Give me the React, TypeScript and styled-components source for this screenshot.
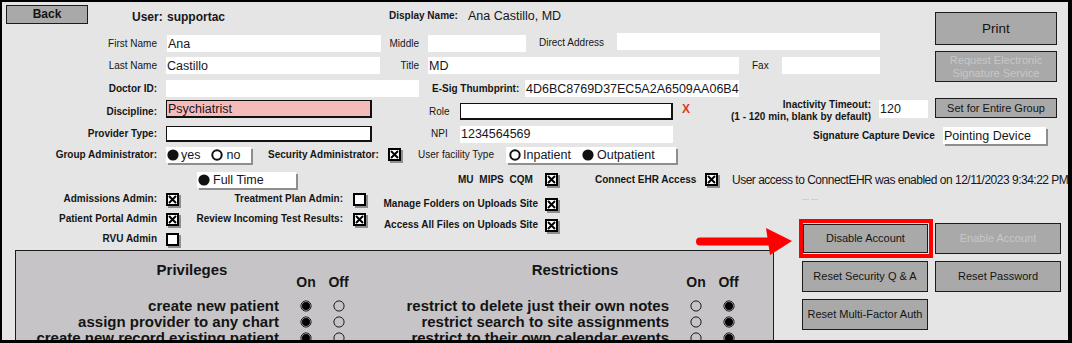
import React from 'react';
import styled, { createGlobalStyle, css } from 'styled-components';

const GlobalStyle = createGlobalStyle`
	html,
	body {
		margin: 0;
		padding: 0;
		background: #ffffff;
	}

	body {
		font-family: 'Liberation Sans', Arial, sans-serif;
		color: #141414;
	}
`;

const Frame = styled.div`
	box-sizing: border-box;
	width: 1072px;
	height: 343px;
	border: 2px solid #000;
	border-right-width: 4px;
	border-bottom-width: 3px;
	background: #e5e5e5;
	overflow: hidden;
`;

const Top = styled.div`
	display: flex;
	align-items: flex-start;
`;

const FormCol = styled.div`
	width: 928px;
	display: flex;
	flex-direction: column;
`;

const SideCol = styled.div`
	margin-left: 5px;
	padding-top: 10px;
	display: flex;
	flex-direction: column;
`;

const Row = styled.div<{ $mt: number; $h: number; $align?: string }>`
	display: flex;
	align-items: ${({ $align }) => $align ?? 'center'};
	margin-top: ${({ $mt }) => $mt}px;
	height: ${({ $h }) => $h}px;
	flex: none;
`;

const HeaderText = styled.span<{ $w?: number; $ml?: number; $mt: number; $size: number; $bold?: boolean }>`
	flex: none;
	${({ $w }) => ($w ? css`width: ${$w}px;` : '')}
	margin-left: ${({ $ml }) => $ml ?? 0}px;
	margin-top: ${({ $mt }) => $mt}px;
	font-size: ${({ $size }) => $size}px;
	font-weight: ${({ $bold }) => ($bold ? 700 : 400)};
	line-height: 14px;
	white-space: nowrap;
	color: #16161c;
`;

const Label = styled.span<{ $w?: number; $ml?: number; $bold?: boolean; $left?: boolean; $end?: boolean }>`
	flex: none;
	box-sizing: border-box;
	${({ $w }) => ($w ? css`width: ${$w}px;` : '')}
	margin-left: ${({ $ml }) => $ml ?? 0}px;
	font-size: 10px;
	line-height: 16px;
	font-weight: ${({ $bold }) => ($bold ? 700 : 400)};
	text-align: ${({ $left }) => ($left ? 'left' : 'right')};
	white-space: nowrap;
	color: #151515;
	${({ $end }) => ($end ? css`align-self: flex-end;` : '')}
`;

const SpacedLabel = styled(Label)`
	word-spacing: 3px;
`;

const InfoBlock = styled.div<{ $w: number; $ml: number }>`
	flex: none;
	width: ${({ $w }) => $w}px;
	margin-left: ${({ $ml }) => $ml}px;
	padding-top: 3px;
	font-size: 10px;
	font-weight: 700;
	line-height: 12px;
	text-align: right;
	white-space: nowrap;
	color: #151515;
`;

type Look = 'plain' | 'boxed' | 'pink' | 'raised';

const Field = styled.div<{ $w: number; $h?: number; $ml?: number; $look?: Look; $self?: string }>`
	flex: none;
	box-sizing: border-box;
	display: flex;
	align-items: center;
	width: ${({ $w }) => $w}px;
	height: ${({ $h }) => $h ?? 17}px;
	margin-left: ${({ $ml }) => $ml ?? 0}px;
	${({ $self }) => ($self ? css`align-self: ${$self};` : '')}
	padding-left: 1px;
	background: #ffffff;
	font-size: 12.5px;
	white-space: nowrap;
	overflow: hidden;
	color: #16161c;

	${({ $look }) =>
		$look === 'boxed' || $look === 'pink'
			? css`
					border: 1px solid #111;
					border-right-width: 2px;
					border-bottom-width: 2px;
			  `
			: ''}
	${({ $look }) => ($look === 'pink' ? css`background: #f5bbbb;` : '')}
	${({ $look }) =>
		$look === 'raised'
			? css`
					overflow: visible;
					box-shadow: 2px 2px 0 #8e8e8e;
			  `
			: ''}
`;

const OptionText = styled.span<{ $ml: number }>`
	display: inline-flex;
	margin-left: ${({ $ml }) => $ml}px;
	font-size: 12.5px;
	line-height: 14px;
	color: #16161c;
`;

const RedX = styled.span`
	flex: none;
	width: 8px;
	margin-left: 9px;
	font-size: 12px;
	font-weight: 700;
	color: #e3372a;
`;

const Btn = styled.button<{ $w: number; $h: number; $ml?: number; $mt?: number; $fs?: number; $bold?: boolean }>`
	flex: none;
	box-sizing: border-box;
	width: ${({ $w }) => $w}px;
	height: ${({ $h }) => $h}px;
	margin: 0;
	margin-left: ${({ $ml }) => $ml ?? 0}px;
	margin-top: ${({ $mt }) => $mt ?? 0}px;
	padding: 0 2px;
	background: #a9a9a9;
	border: 1px solid #1c1c1c;
	border-radius: 0;
	font-family: inherit;
	font-size: ${({ $fs }) => $fs ?? 11}px;
	font-weight: ${({ $bold }) => ($bold ? 700 : 400)};
	line-height: 13px;
	color: #141414;

	&:disabled {
		color: #c7c7c7;
	}
`;

const InfoText = styled.span<{ $ml: number }>`
	margin-left: ${({ $ml }) => $ml}px;
	font-size: 12px;
	letter-spacing: -0.5px;
	white-space: nowrap;
	color: #16161c;
`;

const CheckWrap = styled.span<{ $ml?: number }>`
	flex: none;
	display: inline-flex;
	width: 13px;
	height: 13px;
	margin-left: ${({ $ml }) => $ml ?? 0}px;
	background: #ffffff;
	box-shadow: 2px 2px 0 #8e8e8e;
`;

function Check({ on, ml }: { on: boolean; ml?: number }) {
	return (
		<CheckWrap $ml={ml}>
			<svg width="13" height="13" viewBox="0 0 13 13">
				<rect x="1" y="1" width="11" height="11" fill="#fff" stroke="#000" strokeWidth="2" />
				{on ? <path d="M3 3 L10 10 M10 3 L3 10" stroke="#000" strokeWidth="2" /> : null}
			</svg>
		</CheckWrap>
	);
}

const DotWrap = styled.span`
	flex: none;
	display: inline-flex;
	width: 12px;
	height: 12px;
`;

function Dot({ on }: { on: boolean }) {
	return (
		<DotWrap>
			<svg width="12" height="12" viewBox="0 0 12 12">
				{on ? (
					<circle cx="6" cy="6" r="5.6" fill="#111" />
				) : (
					<circle cx="6" cy="6" r="4.7" fill="#fff" stroke="#111" strokeWidth="2" />
				)}
			</svg>
		</DotWrap>
	);
}

const Section = styled.div`
	position: relative;
	display: flex;
	margin-top: 4px;
`;

const LeftCol = styled.div`
	width: 797px;
	flex: none;
	display: flex;
	flex-direction: column;
`;

const AdminArea = styled.div`
	display: flex;
	height: 56px;
`;

const AdminCol = styled.div<{ $ml?: number; $mt?: number; $gap: number }>`
	display: flex;
	flex-direction: column;
	gap: ${({ $gap }) => $gap}px;
	margin-left: ${({ $ml }) => $ml ?? 0}px;
	margin-top: ${({ $mt }) => $mt ?? 0}px;
`;

const AdminRow = styled.div`
	display: flex;
	align-items: center;
	height: 14px;
`;

const Panel = styled.div`
	box-sizing: border-box;
	width: 759px;
	height: 100px;
	margin: 2px 0 0 13px;
	padding-top: 10px;
	border: 1px solid #1c1c1c;
	background: #c6c4c6;
	display: flex;
`;

const ListGrid = styled.div<{ $text: number }>`
	display: grid;
	grid-template-columns: ${({ $text }) => $text}px 32px 33px;
	grid-template-rows: 37px repeat(4, 16px);
`;

const ListTitle = styled.div<{ $pad: number }>`
	grid-column: 1;
	align-self: start;
	padding-left: ${({ $pad }) => $pad}px;
	text-align: center;
	font-size: 15px;
	font-weight: 700;
	line-height: 18px;
	color: #141414;
`;

const ColHead = styled.div`
	align-self: start;
	margin-top: 13px;
	text-align: center;
	font-size: 14px;
	font-weight: 700;
	line-height: 16px;
	color: #141414;
`;

const ItemText = styled.div`
	grid-column: 1;
	padding-right: 11px;
	text-align: right;
	font-size: 15px;
	font-weight: 700;
	line-height: 16px;
	white-space: nowrap;
	color: #141414;
`;

const RadioCell = styled.div`
	display: flex;
	align-items: center;
	justify-content: center;
`;

function PanelRadio({ on }: { on: boolean }) {
	return (
		<svg width="12" height="12" viewBox="0 0 12 12">
			<circle cx="6" cy="6" r="5.1" fill="none" stroke="#1a1a1a" strokeWidth="1" />
			{on ? <circle cx="6" cy="6" r="4" fill="#000" /> : null}
		</svg>
	);
}

const RightCol = styled.div`
	display: flex;
	flex-direction: column;
`;

const Dashes = styled.div`
	width: 16px;
	height: 1px;
	margin: 7px 0 0 3px;
	background: repeating-linear-gradient(90deg, #cdcdcd 0 7px, transparent 7px 9px);
`;

const BtnRow = styled.div<{ $mt: number }>`
	display: flex;
	align-items: center;
	margin-top: ${({ $mt }) => $mt}px;
`;

const Highlight = styled.div`
	box-sizing: border-box;
	width: 134px;
	height: 39px;
	border: 4px solid #ff0000;
	display: flex;
	align-items: flex-start;
`;

const Arrow = styled.svg`
	position: absolute;
	left: 692px;
	top: 36px;
`;

const privileges = [
	{ text: 'create new patient', on: true },
	{ text: 'assign provider to any chart', on: true },
	{ text: 'create new record existing patient', on: true },
	{ text: 'edit patient demographics', on: true },
];

const restrictions = [
	{ text: 'restrict to delete just their own notes', on: false },
	{ text: 'restrict search to site assignments', on: false },
	{ text: 'restrict to their own calendar events', on: false },
	{ text: 'restrict to their own tasks', on: false },
];

function OnOffList({
	title,
	titlePad,
	textWidth,
	items,
}: {
	title: string;
	titlePad: number;
	textWidth: number;
	items: { text: string; on: boolean }[];
}) {
	return (
		<ListGrid $text={textWidth}>
			<ListTitle $pad={titlePad}>{title}</ListTitle>
			<ColHead>On</ColHead>
			<ColHead>Off</ColHead>
			{items.map((item) => (
				<React.Fragment key={item.text}>
					<ItemText>{item.text}</ItemText>
					<RadioCell>
						<PanelRadio on={item.on} />
					</RadioCell>
					<RadioCell>
						<PanelRadio on={!item.on} />
					</RadioCell>
				</React.Fragment>
			))}
		</ListGrid>
	);
}

export default function App() {
	return (
		<>
			<GlobalStyle />
			<Frame>
				<Top>
					<FormCol>
						<Row $mt={3} $h={19} $align="flex-start">
							<Btn $w={82} $h={19} $ml={4} $fs={12} $bold>
								Back
							</Btn>
							<HeaderText $ml={44} $w={35} $mt={5} $size={12} $bold>
								User:
							</HeaderText>
							<HeaderText $w={222} $mt={5} $size={12} $bold>
								supportac
							</HeaderText>
							<HeaderText $w={79} $mt={4} $size={10} $bold>
								Display Name:
							</HeaderText>
							<HeaderText $mt={4} $size={12.5}>
								Ana Castillo, MD
							</HeaderText>
						</Row>

						<Row $mt={9} $h={19}>
							<Label $w={155} $end>
								First Name
							</Label>
							<Field $w={214} $ml={10} $self="flex-end">
								Ana
							</Field>
							<Label $w={38} $end>
								Middle
							</Label>
							<Field $w={98} $ml={9} $self="flex-end" />
							<Label $ml={13} $w={66} $left>
								Direct Address
							</Label>
							<Field $w={263} $ml={12} $self="flex-start" />
						</Row>

						<Row $mt={5} $h={17}>
							<Label $w={155}>Last Name</Label>
							<Field $w={214} $ml={9}>
								Castillo
							</Field>
							<Label $w={39}>Title</Label>
							<Field $w={311} $ml={9}>
								MD
							</Field>
							<Label $ml={13} $w={18} $left>
								Fax
							</Label>
							<Field $w={98} $ml={12} />
						</Row>

						<Row $mt={6} $h={17}>
							<Label $w={155} $bold>
								Doctor ID:
							</Label>
							<Field $w={253} $ml={9} />
							<Label $ml={13} $w={85} $bold>
								E-Sig Thumbprint:
							</Label>
							<Field $w={214} $ml={8}>
								4D6BC8769D37EC5A2A6509AA06B4
							</Field>
						</Row>

						<Row $mt={1} $h={22}>
							<Label $w={155} $bold $end>
								Discipline:
							</Label>
							<Field $w={206} $h={18} $ml={9} $look="pink">
								Psychiatrist
							</Field>
							<Label $ml={57} $w={31} $left $end>
								Role
							</Label>
							<Field $w={213} $look="boxed" $self="flex-end" />
							<RedX>X</RedX>
							<InfoBlock $ml={38} $w={143}>
								Inactivity Timeout:
								<br />
								(1 - 120 min, blank by default)
							</InfoBlock>
							<Field $w={49} $h={18} $ml={8}>
								120
							</Field>
						</Row>
					</FormCol>

					<SideCol>
						<Btn $w={122} $h={33} $fs={13.5}>
							Print
						</Btn>
						<Btn $w={122} $h={31} $mt={6} disabled>
							Request Electronic
							<br />
							Signature Service
						</Btn>
						<Btn $w={122} $h={20} $mt={16}>
							Set for Entire Group
						</Btn>
					</SideCol>
				</Top>

				<Row $mt={4} $h={20}>
					<Label $w={155} $bold>
						Provider Type:
					</Label>
					<Field $w={206} $h={16} $ml={9} $look="boxed" />
					<Label $ml={59} $w={29} $left>
						NPI
					</Label>
					<Field $w={213}>1234564569</Field>
					<Label $ml={140} $w={124} $bold $left $end>
						Signature Capture Device
					</Label>
					<Field $w={103} $ml={6} $look="raised" $self="flex-end">
						Pointing Device
					</Field>
				</Row>

				<Row $mt={2} $h={17}>
					<Label $w={155} $bold>
						Group Administrator:
					</Label>
					<Field $w={85} $h={16} $ml={9} $look="raised">
						<Dot on />
						<OptionText $ml={2}>yes</OptionText>
						<OptionText $ml={11}>
							<Dot on={false} />
						</OptionText>
						<OptionText $ml={3}>no</OptionText>
					</Field>
					<Label $ml={17} $w={110} $bold $left>
						Security Administrator:
					</Label>
					<Check on ml={10} />
					<Label $ml={17} $w={80} $left $end>
						User facility Type
					</Label>
					<Field $w={170} $h={16} $ml={8} $look="raised">
						<OptionText $ml={2}>
							<Dot on={false} />
						</OptionText>
						<OptionText $ml={2}>Inpatient</OptionText>
						<OptionText $ml={11}>
							<Dot on />
						</OptionText>
						<OptionText $ml={3}>Outpatient</OptionText>
					</Field>
				</Row>

				<Row $mt={8} $h={17}>
					<Field $w={99} $h={16} $ml={195} $look="raised">
						<Dot on />
						<OptionText $ml={3}>Full Time</OptionText>
					</Field>
					<SpacedLabel $ml={162} $w={78} $bold $left $end>
						MU MIPS CQM
					</SpacedLabel>
					<Check on ml={9} />
					<Label $ml={37} $w={103} $bold $left $end>
						Connect EHR Access
					</Label>
					<Check on ml={7} />
					<InfoText $ml={14}>User access to ConnectEHR was enabled on 12/11/2023 9:34:22 PM</InfoText>
				</Row>

				<Section>
					<LeftCol>
						<AdminArea>
							<AdminCol $gap={6}>
								<AdminRow>
									<Label $w={155} $bold>
										Admissions Admin:
									</Label>
									<Check on ml={9} />
								</AdminRow>
								<AdminRow>
									<Label $w={155} $bold>
										Patient Portal Admin
									</Label>
									<Check on ml={9} />
								</AdminRow>
								<AdminRow>
									<Label $w={155} $bold>
										RVU Admin
									</Label>
									<Check on={false} ml={9} />
								</AdminRow>
							</AdminCol>
							<AdminCol $gap={6} $ml={12}>
								<AdminRow>
									<Label $w={152} $bold>
										Treatment Plan Admin:
									</Label>
									<Check on={false} ml={10} />
								</AdminRow>
								<AdminRow>
									<Label $w={152} $bold>
										Review Incoming Test Results:
									</Label>
									<Check on ml={10} />
								</AdminRow>
							</AdminCol>
							<AdminCol $gap={7} $ml={13} $mt={5}>
								<AdminRow>
									<Label $w={159} $bold>
										Manage Folders on Uploads Site
									</Label>
									<Check on ml={7} />
								</AdminRow>
								<AdminRow>
									<Label $w={159} $bold>
										Access All Files on Uploads Site
									</Label>
									<Check on ml={7} />
								</AdminRow>
							</AdminCol>
						</AdminArea>

						<Panel>
							<OnOffList title="Privileges" titlePad={78} textWidth={274} items={privileges} />
							<OnOffList title="Restrictions" titlePad={115} textWidth={325} items={restrictions} />
						</Panel>
					</LeftCol>

					<RightCol>
						<Dashes />
						<BtnRow $mt={19}>
							<Highlight>
								<Btn $w={125} $h={29} $mt={1}>
									Disable Account
								</Btn>
							</Highlight>
							<Btn $w={126} $h={31} $ml={2} disabled>
								Enable Account
							</Btn>
						</BtnRow>
						<BtnRow $mt={3}>
							<Btn $w={126} $h={31} $ml={3}>
								Reset Security Q &amp; A
							</Btn>
							<Btn $w={126} $h={31} $ml={7}>
								Reset Password
							</Btn>
						</BtnRow>
						<BtnRow $mt={7}>
							<Btn $w={126} $h={31} $ml={3}>
								Reset Multi-Factor Auth
							</Btn>
						</BtnRow>
					</RightCol>

					<Arrow width="100" height="27" viewBox="0 0 100 27">
						<line x1="6" y1="13.5" x2="76" y2="13.5" stroke="#ff0000" strokeWidth="8" strokeLinecap="round" />
						<polygon points="72,0 98,13 76,27" fill="#ff0000" />
					</Arrow>
				</Section>
			</Frame>
		</>
	);
}
